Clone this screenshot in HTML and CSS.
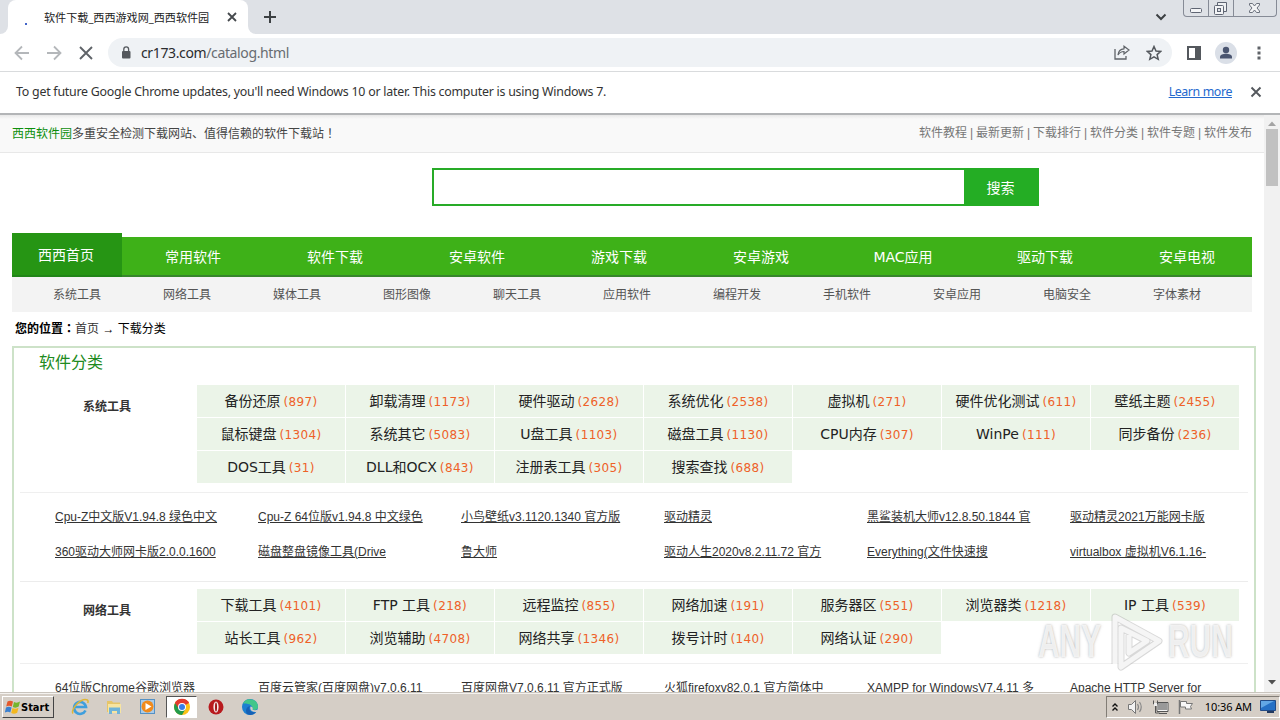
FILE: index.html
```html
<!DOCTYPE html>
<html lang="zh-CN">
<head>
<meta charset="utf-8">
<title>软件下载_西西游戏网_西西软件园</title>
<link rel="stylesheet" href="styles.css">
</head>
<body>

<div class="tabstrip">
  <div class="tab-left"></div>
  <div class="tab">
    <span class="spinner"></span>
    <span class="tab-title">软件下载_西西游戏网_西西软件园</span>
    <svg class="tab-close" width="10" height="10" viewBox="0 0 10 10"><path d="M1 1l8 8M9 1l-8 8" stroke="#45494d" stroke-width="1.8"/></svg>
  </div>
  <div class="tab-rest">
    <svg class="new-tab" width="14" height="14" viewBox="0 0 14 14"><path d="M7 1v12M1 7h12" stroke="#3c4043" stroke-width="2"/></svg>
    <svg class="tab-search" width="12" height="8" viewBox="0 0 12 8"><path d="M1.500 1.500L6 6l4.500-4.500" fill="none" stroke="#3c4043" stroke-width="2"/></svg>
    <div class="window-buttons">
      <span><svg width="24" height="16"><rect x="6.500" y="8.500" width="11" height="4" rx="1" fill="#f3f4f6" stroke="#5f6573"/></svg></span>
      <span><svg width="24" height="16"><path d="M8.500 5V2.500h9v9H15" fill="#eef0f2" stroke="#5f6573"/><rect x="5.500" y="5.500" width="9" height="9" rx="1" fill="#f3f4f6" stroke="#5f6573"/><rect x="8.500" y="8.500" width="3" height="3" fill="#dee1e6" stroke="#5f6573"/></svg></span>
      <span class="wide"><svg width="41" height="16"><path d="M15.500 3.500h3l2 2.500 2-2.500h3v1.500l-2.500 3 2.500 3v1.500h-3l-2-2.500-2 2.500h-3v-1.500l2.500-3-2.500-3z" fill="#f3f4f6" stroke="#6b717d"/></svg></span>
    </div>
  </div>
</div>

<div class="toolbar">
  <svg class="nav-icon" width="16" height="16" viewBox="0 0 16 16"><path d="M15 8H2M8 1.500L1.500 8 8 14.500" fill="none" stroke="#b4b7ba" stroke-width="1.800"/></svg>
  <svg class="nav-icon" width="16" height="16" viewBox="0 0 16 16"><path d="M1 8h13M8 1.500L14.500 8 8 14.500" fill="none" stroke="#b4b7ba" stroke-width="1.800"/></svg>
  <svg class="nav-icon" width="16" height="16" viewBox="0 0 16 16"><path d="M2 2l12 12M14 2L2 14" stroke="#5f6368" stroke-width="1.900"/></svg>
  <div class="omnibox">
    <svg width="10" height="13" viewBox="0 0 10 13"><rect x="1" y="5" width="8.500" height="7.500" rx="1" fill="#54585d"/><path d="M2.800 5V3.200a2.400 2.400 0 0 1 4.800 0V5" fill="none" stroke="#54585d" stroke-width="1.300"/></svg>
    <span class="url">cr173.com<i>/catalog.html</i></span>
    <svg class="share" width="16" height="15" viewBox="0 0 16 15"><path d="M1 4v10h11v-3" fill="none" stroke="#5f6368" stroke-width="1.300"/><path d="M4 10c.4-4 2.500-6 6-6.200V1.200L15 5l-5 4V6.500C7.300 6.500 5.500 7.500 4 10z" fill="none" stroke="#5f6368" stroke-width="1.200"/></svg>
    <svg class="star" width="16" height="16" viewBox="0 0 16 16"><path d="M8 1.500l2 4.500 4.700.4-3.600 3.200 1.100 4.700L8 11.800l-4.200 2.500 1.100-4.700L1.300 6.400 6 6z" fill="none" stroke="#54585d" stroke-width="1.500"/></svg>
  </div>
  <svg class="panel-icon" width="14" height="14" viewBox="0 0 14 14"><path d="M0 0h14v14H0zM2 2v10h6V2z" fill="#54585d" fill-rule="evenodd"/></svg>
  <svg class="avatar" width="22" height="22" viewBox="0 0 22 22"><circle cx="11" cy="11" r="11" fill="#dadfe7"/><circle cx="11" cy="8" r="3.200" fill="#4a5570"/><path d="M5 16.500v-1.500c0-2.200 3-3.200 6-3.200s6 1 6 3.200v1.500z" fill="#4a5570"/></svg>
  <svg class="menu-icon" width="4" height="14" viewBox="0 0 4 14"><path d="M.5.500h3v3h-3zM.5 5.500h3v3h-3zM.5 10.500h3v3h-3z" fill="#5f6368"/></svg>
</div>

<div class="infobar">
  <span class="message">To get future Google Chrome updates, you'll need Windows 10 or later. This computer is using Windows 7.</span>
  <a class="learn">Learn more</a>
  <svg width="12" height="12" viewBox="0 0 12 12"><path d="M1.500 1.500l9 9M10.500 1.500l-9 9" stroke="#54585d" stroke-width="1.900"/></svg>
</div>

<div class="viewport">
  <div class="page">
    <div class="topbar">
      <div class="slogan"><b>西西软件园</b>多重安全检测下载网站、值得信赖的软件下载站<span class="mark" lang="ja">！</span></div>
      <div class="toplinks">软件教程 | 最新更新 | 下载排行 | 软件分类 | 软件专题 | 软件发布</div>
    </div>

    <div class="search">
      <input type="text" class="search-input">
      <button class="search-button">搜索</button>
    </div>

    <div class="nav">
      <a class="home">西西首页</a>
      <div class="nav-items">
        <a>常用软件</a><a>软件下载</a><a>安卓软件</a><a>游戏下载</a><a>安卓游戏</a><a>MAC应用</a><a>驱动下载</a><a>安卓电视</a>
      </div>
    </div>
    <div class="subnav">
      <a>系统工具</a><a>网络工具</a><a>媒体工具</a><a>图形图像</a><a>聊天工具</a><a>应用软件</a><a>编程开发</a><a>手机软件</a><a>安卓应用</a><a>电脑安全</a><a>字体素材</a>
    </div>

    <div class="crumbs"><b>您的位置<span class="mark" lang="ja">：</span></b><span class="first">首页</span> → 下载分类</div>

    <div class="catalog">
      <h2>软件分类</h2>

      <div class="category">
        <h3>系统工具</h3>
        <div class="cells">
          <a>备份还原<em>(897)</em></a>
          <a>卸载清理<em>(1173)</em></a>
          <a>硬件驱动<em>(2628)</em></a>
          <a>系统优化<em>(2538)</em></a>
          <a>虚拟机<em>(271)</em></a>
          <a>硬件优化测试<em>(611)</em></a>
          <a>壁纸主题<em>(2455)</em></a>
          <a>鼠标键盘<em>(1304)</em></a>
          <a>系统其它<em>(5083)</em></a>
          <a>U盘工具<em>(1103)</em></a>
          <a>磁盘工具<em>(1130)</em></a>
          <a>CPU内存<em>(307)</em></a>
          <a>WinPe<em>(111)</em></a>
          <a>同步备份<em>(236)</em></a>
          <a>DOS工具<em>(31)</em></a>
          <a>DLL和OCX<em>(843)</em></a>
          <a>注册表工具<em>(305)</em></a>
          <a>搜索查找<em>(688)</em></a>
        </div>
      </div>
      <div class="downloads">
        <a>Cpu-Z中文版V1.94.8 绿色中文</a>
        <a>Cpu-Z 64位版v1.94.8 中文绿色</a>
        <a>小鸟壁纸v3.1120.1340 官方版</a>
        <a>驱动精灵</a>
        <a>黑鲨装机大师v12.8.50.1844 官</a>
        <a>驱动精灵2021万能网卡版</a>
        <a>360驱动大师网卡版2.0.0.1600</a>
        <a>磁盘整盘镜像工具(Drive</a>
        <a>鲁大师</a>
        <a>驱动人生2020v8.2.11.72 官方</a>
        <a>Everything(文件快速搜</a>
        <a>virtualbox 虚拟机V6.1.16-</a>
      </div>

      <div class="category second">
        <h3>网络工具</h3>
        <div class="cells">
          <a>下载工具<em>(4101)</em></a>
          <a>FTP 工具<em>(218)</em></a>
          <a>远程监控<em>(855)</em></a>
          <a>网络加速<em>(191)</em></a>
          <a>服务器区<em>(551)</em></a>
          <a>浏览器类<em>(1218)</em></a>
          <a>IP 工具<em>(539)</em></a>
          <a>站长工具<em>(962)</em></a>
          <a>浏览辅助<em>(4708)</em></a>
          <a>网络共享<em>(1346)</em></a>
          <a>拨号计时<em>(140)</em></a>
          <a>网络认证<em>(290)</em></a>
        </div>
      </div>
      <div class="downloads">
        <a>64位版Chrome谷歌浏览器</a>
        <a>百度云管家(百度网盘)v7.0.6.11</a>
        <a>百度网盘V7.0.6.11 官方正式版</a>
        <a>火狐firefoxv82.0.1 官方简体中</a>
        <a>XAMPP for WindowsV7.4.11 多</a>
        <a>Apache HTTP Server for</a>
      </div>
    </div>
  </div>

  <div class="scrollbar">
    <svg width="8" height="5" viewBox="0 0 8 5"><path d="M0 5l4-4.500L8 5z" fill="#a3a3a3"/></svg>
    <div class="thumb"></div>
    <svg class="down" width="8" height="5" viewBox="0 0 8 5"><path d="M0 0l4 4.500L8 0z" fill="#505050"/></svg>
  </div>

  <div class="watermark">
    <span>ANY</span>
    <svg width="62" height="62" viewBox="0 0 62 62"><path d="M10 54V7l44 24-38 26V18l26 13-18 12V25" fill="none" stroke="#a8a8a8" stroke-opacity=".45" stroke-width="7" stroke-linejoin="round"/><path d="M10 54V7l44 24-38 26V18l26 13-18 12V25" fill="none" stroke="#f5f5f5" stroke-width="5" stroke-linejoin="round"/></svg>
    <span>RUN</span>
  </div>
</div>

<div class="taskbar">
  <div class="start">
    <svg width="16" height="16" viewBox="0 0 16 16"><path d="M2.500 2.500Q5 .8 8 2.500L6.800 7.500Q4 6 1.200 7.500z" fill="#e4582b"/><path d="M9 3q3 1.500 6-.5l-1.300 5Q11 9.500 7.800 8z" fill="#75b52c"/><path d="M1 8.500q2.800-1.500 5.600 0l-1.300 5Q3 12-.2 13.500z" fill="#3a80d0"/><path d="M7.500 9q3 1.500 6-.3l-1.300 5q-3 1.800-6 .3z" fill="#f3b81f"/></svg>
    <b>Start</b>
  </div>
  <div class="launchers">
    <span><svg width="18" height="18" viewBox="0 0 18 18"><path d="M14.500 12.500a6 6 0 1 1 .5-3.500H4" fill="none" stroke="#3f9fdd" stroke-width="2.600"/><path d="M2 15.500C-1 12 10-1 16.500 2q1 1 .2 3" fill="none" stroke="#dfb637" stroke-width="1.500"/></svg></span>
    <span><svg width="18" height="18" viewBox="0 0 18 18"><path d="M2 3h5l1 1.500h7V14H2z" fill="#e6c568"/><path d="M3 6h13v9H3z" fill="#f7e4a0"/><path d="M4 16v-6.500h11V16h-3v-3H7v3z" fill="#6fb3d8"/></svg></span>
    <span><svg width="18" height="18" viewBox="0 0 18 18"><rect x="1.500" y="1.500" width="14" height="14" fill="#a9cbe9" stroke="#5591c4"/><circle cx="8.500" cy="8.500" r="6" fill="#f08a1c"/><path d="M6.500 5l6 3.500-6 3.500z" fill="#fff"/></svg></span>
    <span class="active"><svg width="18" height="18" viewBox="0 0 18 18"><circle cx="9" cy="9" r="8" fill="#fbc116"/><path d="M9 9L2.100 5A8 8 0 0 1 15.900 5z" fill="#e33b2e"/><path d="M2.100 5A8 8 0 0 0 9 17l3.500-6L9 9z" fill="#229a4b"/><path d="M9 5h7a8 8 0 0 0-14-.1L6 11z" fill="#e33b2e"/><circle cx="9" cy="9" r="4" fill="#fff"/><circle cx="9" cy="9" r="3" fill="#377ee8"/></svg></span>
    <span><svg width="18" height="18" viewBox="0 0 18 18"><circle cx="9" cy="9" r="7.500" fill="#b81a1e"/><ellipse cx="9" cy="9" rx="2.600" ry="5.500" fill="#f5e9e9"/><ellipse cx="9" cy="9" rx="1" ry="4.500" fill="#a01518"/></svg></span>
    <span><svg width="18" height="18" viewBox="0 0 18 18"><circle cx="9" cy="9" r="8" fill="#1b7fd1"/><path d="M2 5.500A8 8 0 0 1 17 9c0 3-3.500 3.500-5.500 2.500C12.500 8 9 5 2 5.500z" fill="#41c68a"/><path d="M9 8c-2 3 0 7 6 6.500A8 8 0 0 1 6 16c-2-3-1-7 3-8z" fill="#1560b5"/><path d="M9.500 8.500q3 0 2 3 2 1.500 6 0l-2 2.500Q8 14 9.500 8.500z" fill="#d5cec6"/></svg></span>
  </div>
  <div class="tray">
    <svg width="8" height="10" viewBox="0 0 8 10"><path d="M1.500 4.500L4 2l2.500 2.500M1.500 8.500L4 6l2.500 2.500" fill="none" stroke="#111" stroke-width="1.400"/></svg>
    <svg width="17" height="16" viewBox="0 0 17 16"><path d="M1.500 5.500h3l4-4v13l-4-4h-3z" fill="#f2f2f2" stroke="#777"/><path d="M10.500 5q2 3 0 6M12.500 3q3.500 5 0 10" fill="none" stroke="#888" stroke-width="1.200"/></svg>
    <svg width="17" height="16" viewBox="0 0 17 16"><rect x="5.500" y="3.500" width="10" height="8" fill="#999" stroke="#f5f5f5"/><path d="M5 3.500h11v9H5zM7 14.500h8M3.500 7v7h4M1.500 1.500v3.500h4V1.500" fill="none" stroke="#555"/><path d="M2 4h3v3H2z" fill="#eee"/></svg>
    <svg width="17" height="16" viewBox="0 0 17 16"><path d="M2.500 1v14" stroke="#777" stroke-width="1.500"/><path d="M3.500 2.500h6v2h6l-2 3 1 2.500H8.500V8h-5z" fill="#f7f7f7" stroke="#777"/></svg>
    <span class="clock">10:36 AM</span>
    <svg class="desktop" width="16" height="14" viewBox="0 0 16 14"><path d="M.5.500h15v10H.5z" fill="#2670c5" stroke="#224b87"/><path d="M1 1h13L1 8z" fill="#63a7e5"/><path d="M7 13h7v-2H7z" fill="#223a60"/></svg>
  </div>
</div>

</body>
</html>
```
FILE: styles.css
```css
* {
  box-sizing: border-box;
}

body {
  margin: 0;
  width: 1280px;
  height: 720px;
  overflow: hidden;
  display: flex;
  flex-direction: column;
  background: #fff;
  color: #333;
  font: 12px "Liberation Sans", "Noto Sans CJK SC", sans-serif;
}

svg {
  display: block;
  flex: none;
}

a, span {
  white-space: nowrap;
}

/* browser window */

.tabstrip {
  height: 34px;
  flex: none;
  display: flex;
  background: #fff;
}

.tab-left {
  width: 8px;
  background: #dee1e6;
  border-radius: 0 0 8px 0;
}

.tab {
  width: 240px;
  display: flex;
  align-items: center;
  padding: 0 11px 0 17px;
  background: #fff;
  box-shadow: 0 -20px 0 #dee1e6;
  border-radius: 8px 8px 0 0;
}

.spinner {
  width: 2px;
  height: 2px;
  margin-top: 13px;
  background: #4264c8;
}

.tab-title {
  flex: 1;
  padding-left: 17px;
  font: 11.1px "Noto Sans", "Noto Sans CJK SC", sans-serif;
  color: #222;
}

.tab-rest {
  flex: 1;
  display: flex;
  background: #dee1e6;
  border-radius: 0 0 0 8px;
}

.new-tab {
  margin: 10px 0 0 15px;
}

.tab-search {
  margin: 13px 16px 0 auto;
}

.window-buttons {
  width: 94px;
  height: 17px;
  margin-right: 3px;
  display: flex;
  border: 1px solid #868b96;
  border-top: 0;
  border-radius: 0 0 4px 4px;
}

.window-buttons span {
  width: 25px;
  border-right: 1px solid #868b96;
}

.window-buttons .wide {
  width: 42px;
  border-right: 0;
}

.toolbar {
  height: 38px;
  flex: none;
  display: flex;
  align-items: center;
  padding-left: 14px;
  border-bottom: 1px solid #d9dbdd;
}

.nav-icon {
  margin-right: 16px;
}

.omnibox {
  width: 1064px;
  height: 29px;
  margin-left: -2px;
  display: flex;
  align-items: center;
  padding: 0 10px 0 13px;
  background: #eff2f5;
  border-radius: 15px;
}

.url {
  flex: 1;
  padding-left: 10px;
  font: 14px "Noto Sans", sans-serif;
  letter-spacing: -0.37px;
  color: #2a2c2e;
}

.url i {
  font-style: normal;
  color: #686c71;
}

.share {
  margin-right: 16px;
}

.panel-icon {
  margin-left: 15px;
}

.avatar {
  margin-left: 14px;
}

.menu-icon {
  margin-left: 20px;
}

.infobar {
  height: 43px;
  flex: none;
  display: flex;
  align-items: center;
  padding: 0 18px 2px 16px;
  border-bottom: 2px solid #b3b5b7;
  font: 12.4px "Noto Sans", sans-serif;
  letter-spacing: -0.24px;
  color: #333;
}

.message {
  flex: 1;
}

.learn {
  margin-right: 18px;
  letter-spacing: -0.4px;
  color: #2469ce;
  text-decoration: underline;
}

/* web page */

.viewport {
  position: relative;
  height: 577px;
  flex: none;
  display: flex;
  overflow: hidden;
}

.page {
  width: 1264px;
}

.topbar {
  height: 38px;
  display: flex;
  justify-content: space-between;
  padding: 0 12px;
  line-height: 37px;
  background: linear-gradient(#e8e8e8, #f9f9f9 4px);
  border-bottom: 1px solid #e8e8e8;
  color: #444;
}

.slogan {
  line-height: 35px;
}

.topbar b {
  font-weight: normal;
  color: #0d8f0d;
}

/* full-width punctuation centred in its box */
.mark {
  font-family: "Noto Sans CJK JP", sans-serif;
}

.toplinks {
  color: #777;
  word-spacing: -0.4px;
}

.search {
  display: flex;
  margin: 15px 0 0 432px;
}

.search-input {
  width: 532px;
  height: 38px;
  border: 2px solid #28ab28;
  border-right: 0;
  outline: 0;
  background: #fff;
}

.search-button {
  width: 75px;
  height: 38px;
  padding: 0 2px 0 0;
  border: 0;
  background: #24ad24;
  color: #fff;
  font: 14px "Noto Sans CJK SC", sans-serif;
}

.nav {
  width: 1240px;
  height: 44px;
  margin: 27px 0 0 12px;
  display: flex;
  align-items: flex-end;
  color: #fff;
  font: 14px "DejaVu Sans", "Noto Sans CJK SC", sans-serif;
  text-align: center;
}

.home {
  width: 110px;
  height: 44px;
  padding-right: 2px;
  line-height: 45px;
  background: #269514;
  border-bottom: 2px solid #218518;
}

.nav-items {
  width: 1130px;
  height: 40px;
  display: flex;
  overflow: hidden;
  line-height: 41px;
  background: #3eb118;
  border-bottom: 2px solid #36862b;
}

.nav-items a {
  flex: 0 0 142px;
}

.subnav {
  width: 1240px;
  height: 35px;
  margin-left: 12px;
  padding-left: 10px;
  display: flex;
  line-height: 36px;
  background: #f3f3f3;
  color: #555;
  text-align: center;
}

.subnav a {
  flex: 0 0 110px;
}

.crumbs {
  height: 34px;
  padding-left: 15px;
  line-height: 31px;
  color: #000;
}

.crumbs .first {
  color: #333;
}

.catalog {
  width: 1244px;
  height: 400px;
  margin-left: 12px;
  border: 2px solid #cde2c8;
}

.catalog h2 {
  height: 37px;
  margin: 0;
  padding-left: 25px;
  font-size: 16px;
  font-weight: normal;
  line-height: 29px;
  color: #208a20;
}

.category {
  display: flex;
  height: 108px;
  margin: 0 6px;
  border-bottom: 1px solid #efefef;
}

.category.second {
  height: 75px;
}

.category h3 {
  width: 177px;
  margin: 0;
  padding-right: 3px;
  font-size: 12px;
  line-height: 45px;
  text-align: center;
}

.cells {
  width: 1042px;
  display: grid;
  grid-template-columns: repeat(7, 1fr);
  grid-auto-rows: 32px;
  align-content: start;
  gap: 1px;
}

.cells a {
  background: #ebf4e8;
  color: #222;
  font: 14px/33px "DejaVu Sans", "Noto Sans CJK SC", sans-serif;
  text-align: center;
}

.cells em {
  margin-left: 3px;
  font-size: 12px;
  font-style: normal;
  letter-spacing: 0.35px;
  color: #ee6128;
}

.downloads {
  height: 89px;
  margin: 0 6px 7px;
  padding: 7px 0 0 35px;
  display: grid;
  grid-template-columns: repeat(6, 203px);
  grid-auto-rows: 35px;
  border-bottom: 1px solid #ececec;
  line-height: 35px;
}

.downloads a {
  text-decoration: underline;
}

.scrollbar {
  width: 16px;
  display: flex;
  flex-direction: column;
  align-items: center;
  padding: 6px 0 7px;
  background: #f1f1f1;
}

.thumb {
  width: 12px;
  height: 57px;
  margin-top: 3px;
  background: #c1c1c1;
}

.down {
  margin-top: auto;
}

.watermark {
  position: absolute;
  left: 1038px;
  top: 495px;
  width: 196px;
  height: 62px;
  display: flex;
  align-items: center;
  justify-content: space-between;
  font: bold 46px/62px "Liberation Sans", sans-serif;
  color: rgba(248, 248, 248, 0.9);
  text-shadow: 0 0 3px rgba(120, 120, 120, 0.6);
}

.watermark span {
  width: 66px;
  transform: scaleX(0.65);
  transform-origin: left;
}

/* desktop taskbar */

.taskbar {
  height: 28px;
  flex: none;
  display: flex;
  align-items: center;
  padding-left: 2px;
  background: #d5cec6;
  border-top: 1px solid #c9c4bd;
  box-shadow: inset 0 1px 0 #f4f2ef;
}

.start {
  width: 52px;
  height: 22px;
  margin-top: 1px;
  display: flex;
  align-items: center;
  padding-left: 2px;
  border: 1px solid;
  border-color: #fff #444 #444 #fff;
  color: #000;
  font: 11px "DejaVu Sans Condensed", sans-serif;
}

.launchers {
  flex: 1;
  display: flex;
  gap: 3px;
  margin-left: 10px;
}

.launchers span {
  width: 31px;
  height: 22px;
  display: flex;
  align-items: center;
  justify-content: center;
}

.launchers .active {
  background: #fff;
  border: 1px solid;
  border-color: #555 #fff #fff #555;
}

.tray {
  width: 174px;
  height: 22px;
  display: flex;
  align-items: center;
  gap: 8px;
  padding-left: 4px;
  border: 1px solid;
  border-color: #827d76 #fff #fff #827d76;
}

.clock {
  flex: 1;
  text-align: right;
  color: #000;
  font: 11px "Noto Sans", sans-serif;
  letter-spacing: -0.1px;
}

.desktop {
  margin-right: 3px;
}
```
